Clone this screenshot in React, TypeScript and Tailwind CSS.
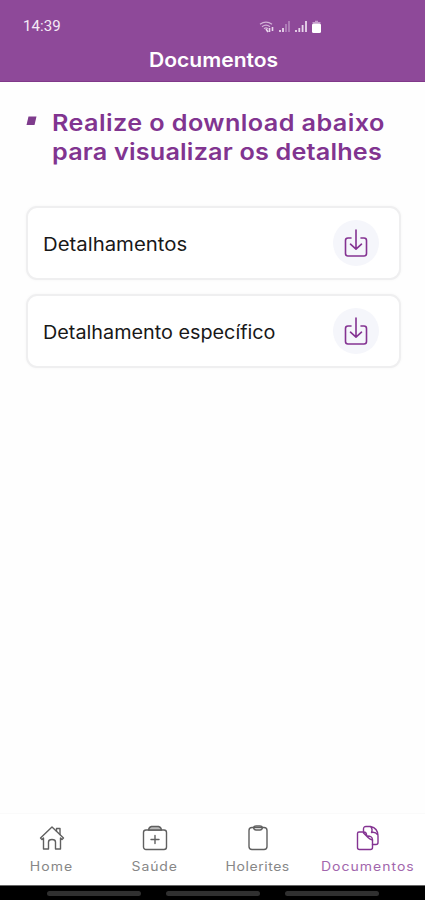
import type { ReactNode } from 'react'

function StatusIcons() {
  return (
    <svg width="64" height="14" viewBox="0 0 64 14" fill="none" stroke="#e9d6ec">
      <path d="M1 4.3Q7 -.2 13 4.3M3 6.7Q7 3.5 11 6.7M5 8.8Q7 7 9 8.8" strokeWidth="1.2" opacity=".75" />
      <path d="M7 9l2 3M10.5 8v4M13.5 7v4" strokeWidth="1.6" />
      <path d="M21 10v2M24 8v4" strokeWidth="1.8" />
      <path d="M27 4v8M30 1v11" strokeWidth="1.8" opacity=".4" />
      <path d="M37 10v2M40.3 8v4M43.6 5v7M47 1v11" strokeWidth="1.8" />
      <path d="M53.5 3.5V2H56V.8h3V2h2.5v1.5" fill="#e9d6ec" stroke="none" opacity=".6" />
      <rect x="53" y="3.5" width="9" height="9.5" rx="1.5" fill="#fff" stroke="none" />
    </svg>
  )
}

function DownloadIcon() {
  return (
    <svg width="24" height="28" viewBox="0 0 24 28" fill="none" stroke="#843392" strokeWidth="1.6" strokeLinecap="round" strokeLinejoin="round">
      <path d="M7 9H4Q1.5 9 1.5 11.5V24.500Q1.500 27 4 27H20Q22.500 27 22.500 24.500V11.500Q22.500 9 20 9H17" />
      <path d="M12 1V20M6.500 15.200L12 20.200L17.500 15.200" />
    </svg>
  )
}

function DocumentCard({ title, stretch }: { title: string; stretch: string }) {
  return (
    <div className="flex h-[74px] items-center justify-between rounded-[11px] border-2 border-[#efeff0] bg-white pl-[15px] pr-5 shadow-[0_0_3px_rgba(0,0,0,0.04)]">
      <span className={`mt-px origin-left whitespace-nowrap text-[18.5px] leading-6 text-[#181818] ${stretch}`}>{title}</span>
      <button className="flex size-[46px] items-center justify-center rounded-full bg-[#f5f6fb]">
        <DownloadIcon />
      </button>
    </div>
  )
}

function NavItem({ label, className, icon }: { label: string; className: string; icon: ReactNode }) {
  return (
    <a className={`flex flex-col items-center ${className}`}>
      <svg width="26" height="26" viewBox="0 0 26 26" fill="none" stroke="currentColor" strokeWidth="1.4" strokeLinecap="round" strokeLinejoin="round">
        {icon}
      </svg>
      <span className="mt-2 scale-x-[1.12] whitespace-nowrap text-[12.5px] leading-4 opacity-75">{label}</span>
    </a>
  )
}

export default function App() {
  return (
    <div className="flex h-[900px] w-[425px] flex-col overflow-hidden bg-[#fefefe] font-['Inter',sans-serif]">
      <header className="h-[82px] border-b border-[#803889] bg-[#8e4999] text-white">
        <div className="flex h-[46px] items-start pl-[23px] pt-[17px]">
          <span className="w-[236px] font-[Roboto] text-[15px] leading-[18px] tracking-[0.1px] text-[#f5eaf6]">14:39</span>
          <div className="pt-[3px]">
            <StatusIcons />
          </div>
        </div>
        <h1 className="scale-x-[1.08] pl-0.5 pt-px text-center text-[19.5px] font-semibold leading-[27px]">Documentos</h1>
      </header>

      <main className="flex-1 pl-[26px] pr-6 pt-[26px]">
        <div className="flex">
          <svg className="mt-[8px] shrink-0" width="12" height="10" viewBox="0 0 12 10">
            <path d="M2.500 0.500H10.500L8.500 9H0.500Z" fill="#7e3b8c" />
          </svg>
          <h2 className="ml-[14px] origin-left scale-x-[1.12] whitespace-nowrap text-[22.5px] font-semibold leading-[29px] text-[#813490]">
            <span className="block tracking-[0.37px]">Realize o download abaixo</span>
            <span className="block tracking-[0.17px]">para visualizar os detalhes</span>
          </h2>
        </div>
        <div className="mt-10 flex flex-col gap-[14px]">
          <DocumentCard title="Detalhamentos" stretch="scale-x-[1.1]" />
          <DocumentCard title="Detalhamento específico" stretch="scale-x-[1.07]" />
        </div>
      </main>

      <nav className="flex h-[72px] border-t border-[#fafafa] bg-white pt-[11px]">
        <NavItem
          label="Home"
          className="w-[103px] tracking-[1px] text-[#606060]"
          icon={
            <>
              <path d="M1.500 13L13 2L24.500 13L23 14.500L21.500 13V24H16.500V17Q16.500 14.500 13 14.500T9.500 17V24H4.500V13L3 14.500Z" />
              <path d="M17.500 6V3.500H21V9.500" />
            </>
          }
        />
        <NavItem
          label="Saúde"
          className="w-[103px] tracking-[0.8px] text-[#606060]"
          icon={
            <>
              <rect x="1.500" y="5" width="23" height="19.500" rx="2.500" />
              <path d="M6.500 5Q7 2 9.500 1.500H16.500Q19 2 19.500 5Z" fill="#bbb" />
              <path d="M13 10.500V18.500M9 14.500H17" />
            </>
          }
        />
        <NavItem
          label="Holerites"
          className="w-[104px] tracking-[0.5px] text-[#606060]"
          icon={
            <>
              <rect x="4" y="2.500" width="18" height="22" rx="3" />
              <path d="M8.500 2.500Q9 1 11 1H15Q17 1 17.500 2.500Q17 5 15 5H11Q9 5 8.500 2.500Z" />
            </>
          }
        />
        <NavItem
          label="Documentos"
          className="w-[115px] tracking-[0.9px] text-[#843392]"
          icon={
            <>
              <path d="M8.500 7H4Q2.500 7 2.500 8.500V22.500Q2.500 24.500 4.500 24.500H15.500Q17.500 24.500 17.500 22.500V15" />
              <path d="M8.500 7Q12 7 11.500 11Q17.500 10.500 17.500 15Q15 14.500 13 12.500L8.500 8Z" />
              <path d="M8.500 6V4Q8.500 1.500 11 1.500H15.500Q23 3 23 11V17.500Q23 19.500 21 19.500H17.500M15.500 1.500Q18 4 16.500 7.500Q20 6.500 23 10" />
            </>
          }
        />
      </nav>

      <div className="flex h-[15px] justify-center gap-[25px] border-t border-[#666] bg-black pt-[5px]">
        <span className="h-[5px] w-[94px] rounded-full bg-[#303030]" />
        <span className="h-[5px] w-[94px] rounded-full bg-[#303030]" />
        <span className="h-[5px] w-[94px] rounded-full bg-[#303030]" />
      </div>
    </div>
  )
}
